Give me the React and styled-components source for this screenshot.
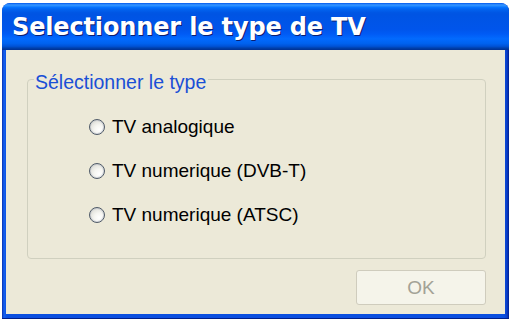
import React from "react";
import styled, { createGlobalStyle } from "styled-components";

const Global = createGlobalStyle`
  html, body { margin: 0; padding: 0; background: #ffffff; }
  body { width: 512px; height: 323px; overflow: hidden; }
`;

const Screen = styled.div`
  width: 512px;
  height: 323px;
  padding: 3px 3px 4px 2px;
  box-sizing: border-box;
  display: flex;
`;

const Window = styled.div`
  flex: 1;
  display: flex;
  flex-direction: column;
  border-radius: 8px 8px 0 0;
  padding: 0 4px 5px 4px;
  box-sizing: border-box;
  overflow: hidden;
  background: linear-gradient(to right, #0831b0 0px, #1660f0 2px, #0a4fe0 5px, #0a4fe0 calc(100% - 5px), #0a3dc8 calc(100% - 2px), #001c8c 100%);
  box-shadow: inset 0 -1px 0 #001f8a;
`;

const TitleBar = styled.div`
  height: 47px;
  margin: 0 -4px;
  padding: 0 10px;
  display: flex;
  align-items: center;
  border-radius: 8px 8px 0 0;
  background: linear-gradient(
    to bottom,
    #0058ee 0%,
    #3593ff 4%,
    #288eff 6%,
    #127dff 8%,
    #036ffc 10%,
    #0262ee 14%,
    #0057e5 20%,
    #0054e3 24%,
    #0055eb 56%,
    #005bf5 66%,
    #026afe 76%,
    #0062ef 86%,
    #0052d6 92%,
    #0040ab 96%,
    #003092 100%
  );
`;

const Title = styled.span`
  font-family: "DejaVu Sans", Verdana, sans-serif;
  font-weight: bold;
  font-size: 24px;
  color: #ffffff;
  text-shadow: 1px 1px 0 #0a1e72;
  letter-spacing: -0.15px;
  margin-top: 1px;
`;

const Body = styled.div`
  flex: 1;
  background: #ece9d8;
  display: flex;
  flex-direction: column;
  padding: 16px 19px 0 21px;
`;

const Group = styled.fieldset`
  margin: 0;
  border: 1px solid #d0d0bf;
  border-radius: 4px;
  padding: 0;
  height: 193px;
  box-sizing: border-box;
`;

const Legend = styled.legend`
  font-family: "Liberation Sans", Arial, sans-serif;
  font-size: 19.5px;
  color: #1a4fd6;
  padding: 6px 2px 0 1px;
  margin-left: 6px;
  line-height: 20px;
`;

const Options = styled.div`
  display: flex;
  flex-direction: column;
  gap: 18px;
  padding: 22px 0 0 61px;
`;

const Option = styled.label`
  display: flex;
  align-items: center;
  height: 26px;
  font-family: "Liberation Sans", Arial, sans-serif;
  font-size: 19px;
  color: #000000;
  gap: 7px;
`;

const Radio = styled.span`
  width: 14px;
  height: 14px;
  border-radius: 50%;
  border: 1px solid #4f5a68;
  background: radial-gradient(circle at 65% 70%, #ffffff 0%, #f6f6f2 35%, #d2d2ca 100%);
  box-shadow: inset 0 0 0 1px rgba(160, 170, 185, 0.35);
  flex: none;
`;

const Footer = styled.div`
  display: flex;
  justify-content: flex-end;
  padding-top: 11px;
`;

const OkButton = styled.button`
  width: 130px;
  height: 35px;
  border: 1px solid #cfccbd;
  border-radius: 3px;
  background: #f5f4ea;
  color: #a3a296;
  font-family: "Liberation Sans", Arial, sans-serif;
  font-size: 19px;
  padding: 0;
`;

const options = ["TV analogique", "TV numerique (DVB-T)", "TV numerique (ATSC)"];

export default function App() {
  return (
    <>
      <Global />
      <Screen>
        <Window>
          <TitleBar>
            <Title>Selectionner le type de TV</Title>
          </TitleBar>
          <Body>
            <Group>
              <Legend>Sélectionner le type</Legend>
              <Options>
                {options.map((o) => (
                  <Option key={o}>
                    <Radio />
                    {o}
                  </Option>
                ))}
              </Options>
            </Group>
            <Footer>
              <OkButton disabled>OK</OkButton>
            </Footer>
          </Body>
        </Window>
      </Screen>
    </>
  );
}
